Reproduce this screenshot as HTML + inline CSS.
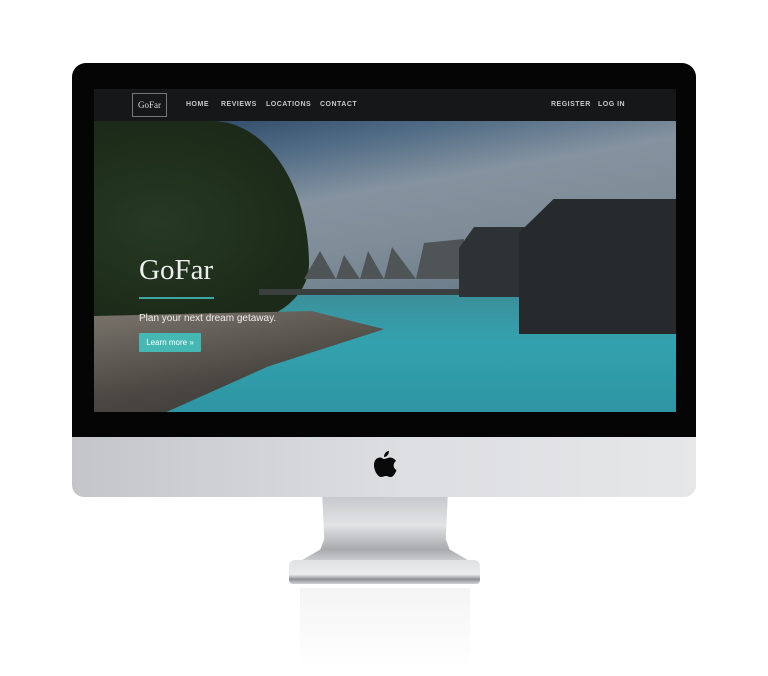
<!DOCTYPE html>
<html><head><style>
body{margin:0;width:768px;height:676px;background:#fff;position:relative;overflow:hidden;font-family:"Liberation Sans",sans-serif}
.bez{position:absolute;left:72px;top:63px;width:624px;height:375px;background:#050505;border-radius:14px 14px 0 0}
.chin{position:absolute;left:72px;top:437px;width:624px;height:60px;background:linear-gradient(90deg,#c4c5c8,#dcdde0 50%,#e6e7e9);border-radius:0 0 12px 12px}
.screen{position:absolute;left:94px;top:89px;width:582px;height:323px;overflow:hidden;background:#33505e}
.sky{position:absolute;left:0;top:32px;width:582px;height:180px;background:linear-gradient(170deg,#24405e 0%,#4e6a84 22%,#8593a0 42%,#7f8d99 62%,#5d6f7e 100%)}
.water{position:absolute;left:0;top:205px;width:582px;height:118px;background:linear-gradient(180deg,#3b8f9a,#33a2ae 40%,#2e95a3 100%)}
.trees{position:absolute;left:0;top:32px;width:215px;height:205px;background:radial-gradient(ellipse at 30% 50%,#263a22,#1c2a19 70%);border-radius:0 45% 40% 0 / 0 70% 30% 0}
.rock{position:absolute;left:0;top:222px;width:290px;height:101px;background:linear-gradient(170deg,#7a746b,#4a4742 60%,#3a3935);clip-path:polygon(0 5%,75% 0,100% 18%,60% 55%,25% 100%,0 100%)}
.hut1{position:absolute;left:425px;top:110px;width:157px;height:135px;background:#262a2d;clip-path:polygon(22% 0,100% 0,100% 100%,0 100%,0 25%)}
.hut2{position:absolute;left:365px;top:138px;width:75px;height:70px;background:#2d3235;clip-path:polygon(20% 0,100% 0,100% 100%,0 100%,0 30%)}
.huts{position:absolute;left:210px;top:150px;width:160px;height:40px;background:#4f5456;clip-path:polygon(0 100%,10% 30%,20% 100%,25% 40%,35% 100%,40% 30%,50% 100%,55% 20%,70% 100%,75% 10%,100% 0,100% 100%)}
.pier{position:absolute;left:165px;top:200px;width:260px;height:6px;background:#3a3f40}
.nav{position:absolute;left:0;top:0;width:582px;height:32px;background:#151719}
.logo{position:absolute;left:38px;top:4px;width:35px;height:24px;border:1px solid #777;color:#ddd;font:9px "Liberation Serif",serif;line-height:22px;text-align:center;box-sizing:border-box}
.nav span{position:absolute;top:12px;color:#c8c8c8;font-size:7px;font-weight:bold;letter-spacing:.5px}
h1{position:absolute;left:45px;top:165px;margin:0;color:#eee;font:normal 29px "Liberation Serif",serif}
.line{position:absolute;left:45px;top:208px;width:75px;height:2px;background:#3fa7a3}
.sub{position:absolute;left:45px;top:224px;color:#eee;font-size:10px}
.btn{position:absolute;left:45px;top:244px;width:62px;height:19px;background:#45b8b4;color:#fff;font-size:8px;line-height:19px;text-align:center;border-radius:1px}
.neck{position:absolute;left:290px;top:497px;width:190px;height:70px;background:linear-gradient(180deg,#c8c9cc,#e2e3e5 40%,#a9aaad 75%,#e0e1e3);clip-path:polygon(17% 0,83% 0,82% 60%,84% 75%,100% 100%,0 100%,16% 75%,18% 60%)}
.base{position:absolute;left:289px;top:560px;width:191px;height:24px;background:linear-gradient(180deg,#dfe0e2,#ecedee 60%,#8e8f92 80%,#cfd0d2);border-radius:6px 6px 4px 4px}
.refl{position:absolute;left:300px;top:588px;width:170px;height:80px;background:linear-gradient(180deg,#f0f0f1,#fff);opacity:.7}
</style></head><body>
<div class="bez"></div>
<div class="chin"></div>
<svg style="position:absolute;left:371px;top:450px" width="27" height="34" viewBox="0 0 27 34"><path d="M18 1c0 3-2 6-5 6 0-3 2-6 5-6zM13 9c2 0 4-1.5 6-1.5 3 0 5 2 6 3.5-3 2-3.5 7 .5 9-1 3-3 7-6 7-2 0-2.5-1-4.5-1s-3 1-5 1c-3 0-7-6-7-12 0-5 3-7.5 6-7.5 2 0 3 1.5 4 1.5z" fill="#0a0a0a"/></svg>
<div class="screen">
<div class="sky"></div><div class="water"></div><div class="trees"></div><div class="rock"></div>
<div class="huts"></div><div class="pier"></div><div class="hut2"></div><div class="hut1"></div>
<div class="nav"><div class="logo">GoFar</div>
<span style="left:92px">HOME</span><span style="left:127px">REVIEWS</span><span style="left:172px">LOCATIONS</span><span style="left:226px">CONTACT</span><span style="left:457px">REGISTER</span><span style="left:504px">LOG IN</span></div>
<h1>GoFar</h1><div class="line"></div>
<div class="sub">Plan your next dream getaway.</div>
<div class="btn">Learn more »</div>
</div>
<div class="neck"></div>
<div class="base"></div>
<div class="refl"></div>
</body></html>
